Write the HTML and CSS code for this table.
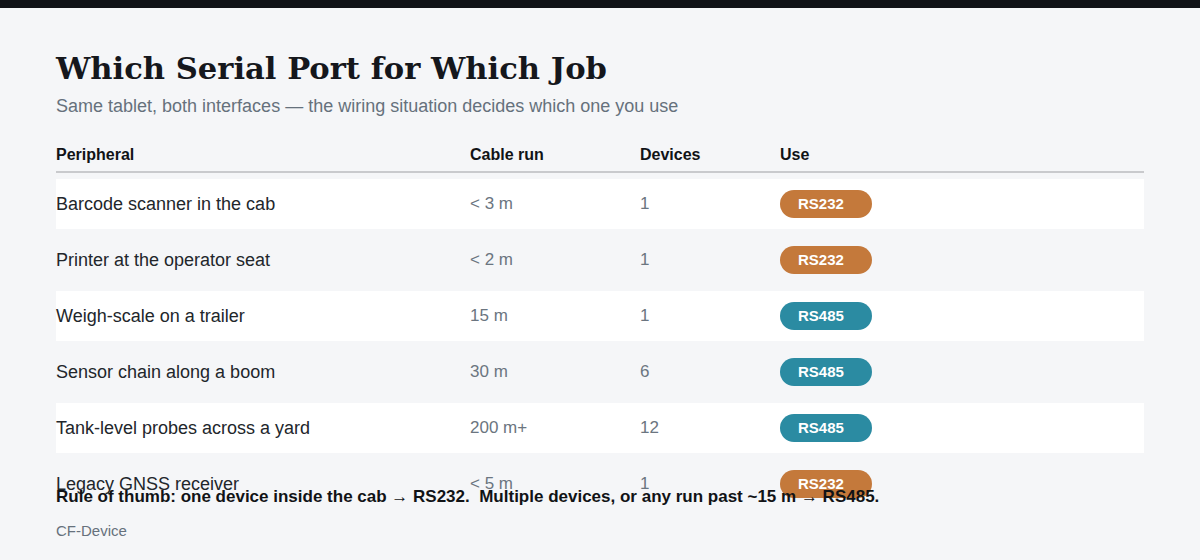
FILE: index.html
```html
<!DOCTYPE html>
<html lang="en">
<head>
<meta charset="utf-8">
<title>Which Serial Port for Which Job</title>
<link rel="stylesheet" href="styles.css">
</head>
<body>
<div class="topbar"></div>
<main class="page">
  <div class="content">
    <h1 class="title">Which Serial Port for Which Job</h1>
    <p class="subtitle">Same tablet, both interfaces — the wiring situation decides which one you use</p>
    <div class="table">
      <div class="row head">
        <div>Peripheral</div><div>Cable run</div><div>Devices</div><div>Use</div>
      </div>
      <div class="row odd">
        <div class="name">Barcode scanner in the cab</div><div class="num">&lt; 3 m</div><div class="num">1</div><div><span class="badge rs232">RS232</span></div>
      </div>
      <div class="row">
        <div class="name">Printer at the operator seat</div><div class="num">&lt; 2 m</div><div class="num">1</div><div><span class="badge rs232">RS232</span></div>
      </div>
      <div class="row odd">
        <div class="name">Weigh-scale on a trailer</div><div class="num">15 m</div><div class="num">1</div><div><span class="badge rs485">RS485</span></div>
      </div>
      <div class="row">
        <div class="name">Sensor chain along a boom</div><div class="num">30 m</div><div class="num">6</div><div><span class="badge rs485">RS485</span></div>
      </div>
      <div class="row odd">
        <div class="name">Tank-level probes across a yard</div><div class="num">200 m+</div><div class="num">12</div><div><span class="badge rs485">RS485</span></div>
      </div>
      <div class="row">
        <div class="name">Legacy GNSS receiver</div><div class="num">&lt; 5 m</div><div class="num">1</div><div><span class="badge rs232">RS232</span></div>
      </div>
    </div>
  </div>
  <p class="rule">Rule of thumb: one device inside the cab → RS232.&nbsp; Multiple devices, or any run past ~15 m → RS485.</p>
  <p class="source">CF-Device</p>
</main>
</body>
</html>
```
FILE: styles.css
```css
* { box-sizing: border-box; }
html, body { margin: 0; padding: 0; }
body {
  width: 1200px;
  height: 560px;
  overflow: hidden;
  background: #f5f6f8;
  font-family: "Liberation Sans", Arial, sans-serif;
  color: #1f2328;
}
.topbar {
  height: 8px;
  background: #111318;
}
.page {
  height: 552px;
  padding: 38px 56px 19px;
  display: flex;
  flex-direction: column;
}
.content {
  flex: 1;
  min-height: 0;
}
.title {
  margin: 0;
  font-family: "DejaVu Serif", "Liberation Serif", serif;
  font-weight: 700;
  font-size: 30.6px;
  line-height: 44px;
  color: #15171c;
}
.subtitle {
  margin: 4px 0 0;
  font-size: 18px;
  line-height: 24px;
  color: #66717c;
}
.table {
  margin-top: 20px;
}
.row {
  display: grid;
  grid-template-columns: 414px 170px 140px 1fr;
  align-items: center;
  height: 50px;
  margin-top: 6px;
  font-size: 18px;
}
.row.head {
  height: 35px;
  margin-top: 0;
  border-bottom: 2px solid #c9cacd;
  font-size: 16px;
  font-weight: 700;
  color: #111316;
}
.row.odd { background: #ffffff; }
.name { color: #22262b; }
.num { color: #6b7580; font-size: 17px; }
.badge {
  display: inline-block;
  width: 92px;
  height: 28px;
  line-height: 28px;
  padding-left: 18px;
  border-radius: 14px;
  font-size: 15px;
  font-weight: 700;
  color: #ffffff;
}
.rs232 { background: #c4793b; }
.rs485 { background: #2b8ba2; }
.rule {
  margin: 0;
  font-size: 17px;
  line-height: 22px;
  font-weight: 700;
  color: #111316;
  position: relative;
}
.source {
  margin: 13px 0 0;
  font-size: 15px;
  line-height: 20px;
  color: #66717c;
}
```
